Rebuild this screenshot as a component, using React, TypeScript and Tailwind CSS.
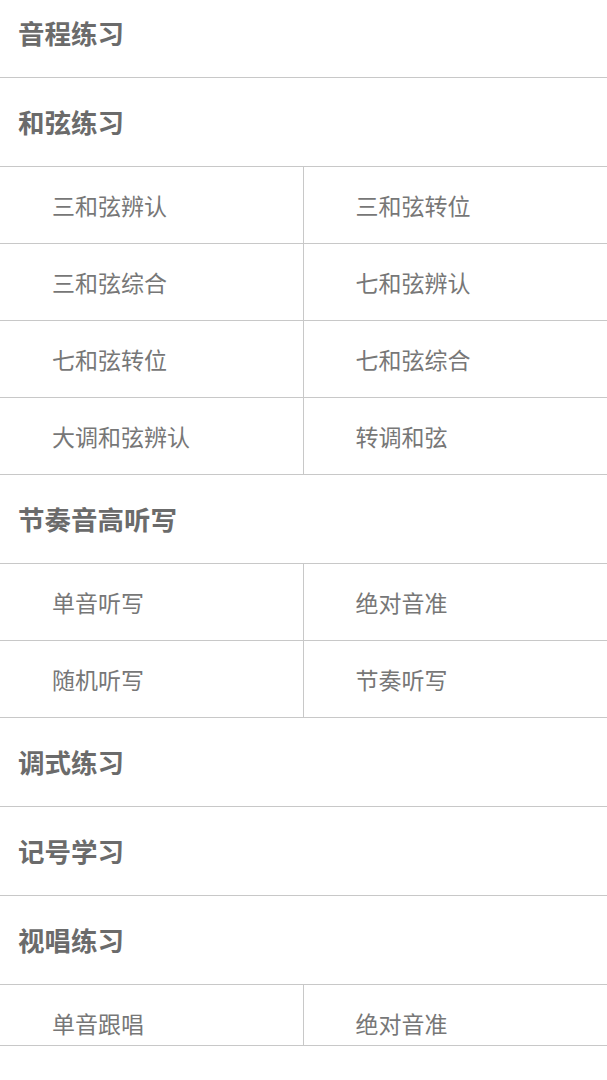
const sections: { title: string; items: string[] }[] = [
  { title: '音程练习', items: [] },
  {
    title: '和弦练习',
    items: ['三和弦辨认', '三和弦转位', '三和弦综合', '七和弦辨认', '七和弦转位', '七和弦综合', '大调和弦辨认', '转调和弦'],
  },
  { title: '节奏音高听写', items: ['单音听写', '绝对音准', '随机听写', '节奏听写'] },
  { title: '调式练习', items: [] },
  { title: '记号学习', items: [] },
  { title: '视唱练习', items: ['单音跟唱', '绝对音准'] },
];

function Section({ title, items }: { title: string; items: string[] }) {
  return (
    <div>
      <div className="h-[89px] flex items-center pl-[18px] border-b border-[#c8c8c8]">
        <span className="text-[26.5px] font-bold text-[#6b6b6b] leading-none">{title}</span>
      </div>
      {items.length > 0 && (
        <div className="grid grid-cols-2">
          {items.map((item, i) => (
            <div
              key={item + i}
              className={`h-[77px] flex items-center pl-[52px] border-b border-[#c8c8c8] ${i % 2 === 0 ? 'border-r' : ''}`}
            >
              <span className="text-[23px] text-[#777777] leading-none">{item}</span>
            </div>
          ))}
        </div>
      )}
    </div>
  );
}

export default function App() {
  return (
    <div
      className="w-[607px] h-[1080px] bg-white flex flex-col overflow-hidden"
      style={{ fontFamily: '"Noto Sans CJK SC", "Noto Sans", sans-serif' }}
    >
      <div className="flex-1 overflow-hidden">
        <div className="-mt-[11px]">
          {sections.map((s) => (
            <Section key={s.title} title={s.title} items={s.items} />
          ))}
        </div>
      </div>
      <div className="h-[35px] shrink-0 bg-white border-t border-[#c8c8c8]" />
    </div>
  );
}
